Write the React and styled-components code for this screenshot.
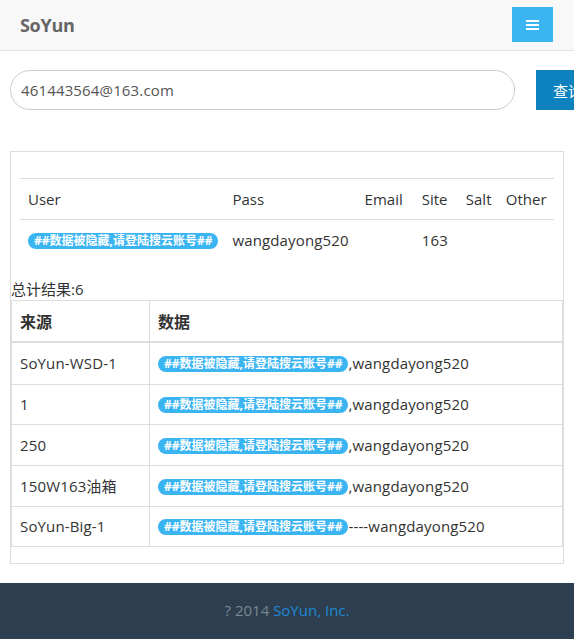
import React from "react";
import styled, { createGlobalStyle } from "styled-components";

const Global = createGlobalStyle`
  html, body { margin: 0; padding: 0; background: #fff; }
  body {
    font-family: "Open Sans", "Noto Sans CJK SC", sans-serif;
    color: #333;
    font-size: 15px;
    overflow-x: hidden;
  }
  * { box-sizing: border-box; }
`;

const Page = styled.div`
  overflow: hidden;
`;

const Navbar = styled.header`
  height: 51px;
  background: #f8f8f8;
  border-bottom: 1px solid #e3e3e3;
  display: flex;
  align-items: center;
  justify-content: space-between;
  padding: 0 21px 0 20px;
`;

const Brand = styled.a`
  font-size: 18px;
  font-weight: 700;
  color: #666;
  text-decoration: none;
  letter-spacing: -0.3px;
`;

const Toggle = styled.button`
  width: 41px;
  height: 35px;
  border: none;
  background: #3bb4f2;
  display: flex;
  flex-direction: column;
  align-items: center;
  justify-content: center;
  gap: 2px;
  padding: 0;
  margin-top: -1px;
`;

const Bar = styled.span`
  display: block;
  width: 13px;
  height: 2px;
  background: #fff;
`;

const Main = styled.main`
  padding: 19px 10px 0;
`;

const SearchRow = styled.form`
  display: flex;
  gap: 21px;
  width: 640px;
`;

const Input = styled.input`
  flex: none;
  width: 505px;
  height: 40px;
  border: 1px solid #ccc;
  border-radius: 20px;
  padding: 0 10px;
  font-family: inherit;
  font-size: 15px;
  letter-spacing: 0.15px;
  color: #555;
  outline: none;
`;

const SearchButton = styled.button`
  flex: none;
  width: 90px;
  height: 40px;
  border: none;
  background: #0e82bf;
  color: #fff;
  font-family: inherit;
  font-size: 15px;
  text-align: left;
  padding: 0 17px;
`;

const Panel = styled.section`
  margin-top: 41px;
  border: 1px solid #ddd;
  padding-bottom: 16px;
`;

const PanelBody = styled.div`
  padding: 26px 9px 0;
`;

const ResultTable = styled.table`
  width: 100%;
  table-layout: fixed;
  border-collapse: collapse;
  border-top: 1px solid #ddd;
`;

const HeadCell = styled.th`
  text-align: left;
  font-weight: 400;
  padding: 0 8px;
  height: 41px;
  border-bottom: 1px solid #ddd;
  white-space: nowrap;
  width: ${(p) => p.$w}px;
`;

const Cell = styled.td`
  padding: 0 8px;
  height: 41px;
  white-space: nowrap;
  letter-spacing: 0.15px;
`;

const Total = styled.div`
  margin-top: 18px;
  line-height: 21px;
  font-size: 15px;
`;

const DataTable = styled.table`
  width: 100%;
  border-collapse: collapse;
  border: 1px solid #ddd;
`;

const HeadRow = styled.tr`
  height: 42px;
`;

const DataHead = styled.th`
  text-align: left;
  font-weight: 700;
  font-size: 16px;
  padding: 0 8px;
  border: 1px solid #ddd;
  border-bottom-width: 2px;
  width: ${(p) => (p.$w ? `${p.$w}px` : "auto")};
`;

const DataRow = styled.tr`
  height: ${(p) => p.$h}px;
`;

const DataCell = styled.td`
  padding: 0 8px;
  border: 1px solid #ddd;
  white-space: nowrap;
  letter-spacing: 0.15px;
`;

const Badge = styled.span`
  display: inline-block;
  background: #3bb4f2;
  color: #fff;
  font-weight: 700;
  font-size: 12px;
  line-height: 16px;
  padding: 0 6px;
  border-radius: 1000px;
  vertical-align: 1px;
  letter-spacing: 0;
`;

const Footer = styled.footer`
  margin-top: 19px;
  background: #2d3e50;
  color: #7b8790;
  text-align: center;
  font-size: 15px;
  padding: 17px 0 30px;
`;

const FootLink = styled.a`
  color: #1b8ad3;
  text-decoration: none;
`;

const HIDDEN = "##数据被隐藏,请登陆搜云账号##";

const rows = [
  { src: "SoYun-WSD-1", sep: ",", pass: "wangdayong520", h: 42 },
  { src: "1", sep: ",", pass: "wangdayong520", h: 40 },
  { src: "250", sep: ",", pass: "wangdayong520", h: 41 },
  { src: "150W163油箱", sep: ",", pass: "wangdayong520", h: 41 },
  { src: "SoYun-Big-1", sep: "----", pass: "wangdayong520", h: 40 },
];

export default function App() {
  return (
    <Page>
      <Global />
      <Navbar>
        <Brand href="#">SoYun</Brand>
        <Toggle type="button" aria-label="menu">
          <Bar />
          <Bar />
          <Bar />
        </Toggle>
      </Navbar>
      <Main>
        <SearchRow onSubmit={(e) => e.preventDefault()}>
          <Input defaultValue="461443564@163.com" />
          <SearchButton type="submit">查询</SearchButton>
        </SearchRow>
        <Panel>
          <PanelBody>
            <ResultTable>
              <thead>
                <tr>
                  <HeadCell $w={204}>User</HeadCell>
                  <HeadCell $w={132}>Pass</HeadCell>
                  <HeadCell $w={57}>Email</HeadCell>
                  <HeadCell $w={44}>Site</HeadCell>
                  <HeadCell $w={40}>Salt</HeadCell>
                  <HeadCell $w={56}>Other</HeadCell>
                </tr>
              </thead>
              <tbody>
                <tr>
                  <Cell>
                    <Badge>{HIDDEN}</Badge>
                  </Cell>
                  <Cell>wangdayong520</Cell>
                  <Cell></Cell>
                  <Cell>163</Cell>
                  <Cell></Cell>
                  <Cell></Cell>
                </tr>
              </tbody>
            </ResultTable>
          </PanelBody>
          <Total>总计结果:6</Total>
          <DataTable>
            <thead>
              <HeadRow>
                <DataHead $w={138}>来源</DataHead>
                <DataHead>数据</DataHead>
              </HeadRow>
            </thead>
            <tbody>
              {rows.map((r, i) => (
                <DataRow key={i} $h={r.h}>
                  <DataCell>{r.src}</DataCell>
                  <DataCell>
                    <Badge>{HIDDEN}</Badge>
                    {r.sep}
                    {r.pass}
                  </DataCell>
                </DataRow>
              ))}
            </tbody>
          </DataTable>
        </Panel>
      </Main>
      <Footer>
        ? 2014 <FootLink href="#">SoYun, Inc.</FootLink>
      </Footer>
    </Page>
  );
}
